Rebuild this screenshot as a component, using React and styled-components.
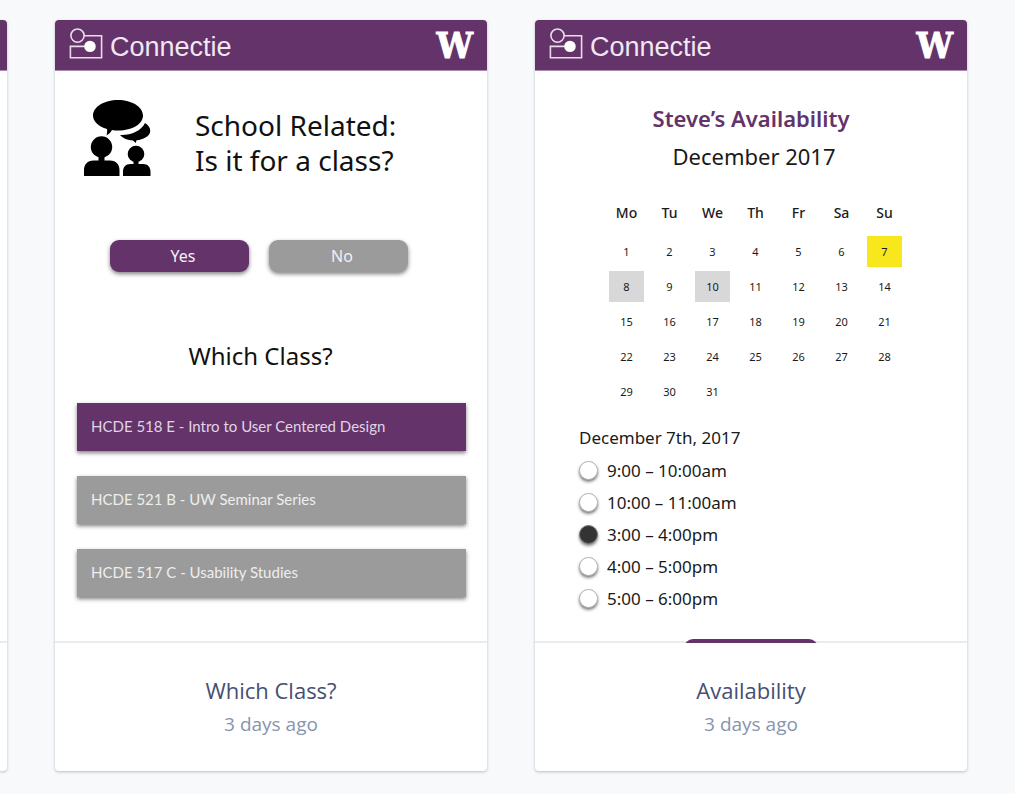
import React from "react";
import styled, { createGlobalStyle } from "styled-components";

const purple = "#63336a";
const humanist = `"Noto Sans", "Open Sans", sans-serif`;

const GlobalStyle = createGlobalStyle`
  *, *::before, *::after { box-sizing: border-box; }
  body { margin: 0; background: #f8f9fb; font-family: "Open Sans", sans-serif; overflow-x: hidden; }
  h2, h3, p { margin: 0; font-weight: 400; }
`;

const Gallery = styled.main`
  display: grid;
  grid-template-columns: 7px minmax(0, 1fr) minmax(0, 1fr) 0;
  gap: 48px;
  padding: 20px 0 23px;
  overflow: hidden;
`;

const Card = styled.article`
  display: flex;
  flex-direction: column;
  background: #fff;
  border-radius: ${(p) => (p.$edge === "left" ? "0 4px 4px 0" : "4px")};
  box-shadow: 0 1px 3px rgba(60, 75, 110, 0.35);
`;

const Preview = styled.div`
  height: 623px;
  overflow: hidden;
  border-radius: inherit;
  border-bottom-left-radius: 0;
  border-bottom-right-radius: 0;
  box-shadow: inset 0 -2px #ececef;
`;

const TopBar = styled.header`
  display: flex;
  align-items: center;
  justify-content: space-between;
  height: 51px;
  padding: 0 14px;
  background: ${purple};
  border-bottom: 1px solid #a98cad;
  color: #fff;
`;

const Brand = styled.div`
  display: flex;
  align-items: center;
  gap: 7px;
  color: #f0e8f1;
  font: 27px/32px "Liberation Sans", Arial, sans-serif;
`;

const BrandName = styled.span`
  padding-top: 4px;
`;

const School = styled.span`
  font: bold 36px/40px "DejaVu Serif Condensed", "DejaVu Serif", serif;
  -webkit-text-stroke: 1px #fff;
`;

const Caption = styled.footer`
  height: 128px;
  padding: 31px 16px 0;
  text-align: center;
`;

const Title = styled.h2`
  color: #454f72;
  font-size: 22px;
  line-height: 32px;
`;

const Age = styled.p`
  color: #8794ae;
  font-size: 19px;
  line-height: 36px;
`;

const ClassScreen = styled.div`
  padding: 28px 21px 0 22px;
  font-family: ${humanist};
  color: #111;
`;

const Question = styled.div`
  display: flex;
  gap: 44px;
  padding-left: 6px;
`;

const QuestionText = styled.h3`
  padding-top: 9px;
  font-size: 28px;
  line-height: 35px;
`;

const Answers = styled.div`
  display: flex;
  gap: 20px;
  padding: 62px 0 0 33px;
`;

const Answer = styled.button`
  width: 139px;
  height: 32px;
  padding: 0 0 0 7px;
  border: 0;
  border-radius: 9px;
  background: ${(p) => (p.$on ? purple : "#9b9b9b")};
  color: #f3eff4;
  font: 16px/32px ${humanist};
  box-shadow: 0 2px 4px rgba(0, 0, 0, 0.5);
`;

const SubHeading = styled.h3`
  padding: 66px 22px 29px 0;
  font-size: 24px;
  line-height: 36px;
  text-align: center;
`;

const ClassList = styled.div`
  display: flex;
  flex-direction: column;
  gap: 25px;
`;

const ClassButton = styled.button`
  height: 48px;
  padding: 0 14px 3px;
  border: 0;
  background: ${(p) => (p.$on ? purple : "#9b9b9b")};
  color: ${(p) => (p.$on ? "#e0d5e2" : "#eeeeee")};
  font: 15px/20px Lato, sans-serif;
  text-align: left;
  box-shadow: 0 2px 4px rgba(0, 0, 0, 0.5);
`;

const AvailabilityScreen = styled.div`
  display: flex;
  flex-direction: column;
  padding-top: 29px;
  font-family: ${humanist};
  color: #1a1a1a;
`;

const Owner = styled.h3`
  color: ${purple};
  font-size: 22px;
  font-weight: 600;
  line-height: 36px;
  text-align: center;
`;

const Month = styled.p`
  padding-left: 6px;
  font-size: 22px;
  line-height: 40px;
  text-align: center;
`;

const Calendar = styled.table`
  align-self: center;
  margin: 18px 0 0 9px;
  border-collapse: collapse;
  table-layout: fixed;
  width: 301px;
  text-align: center;
`;

const Weekday = styled.th`
  height: 40px;
  padding: 0 0 4px;
  font-size: 14px;
  font-weight: 500;
`;

const DayCell = styled.td`
  height: 35px;
  padding: 0;
`;

const marks = { picked: "#f8e71c", busy: "#d8d8d8" };

const Day = styled.span`
  display: block;
  width: 35px;
  margin: 0 auto;
  background: ${(p) => marks[p.$mark] || "transparent"};
  font-size: 11px;
  line-height: 31px;
`;

const Slots = styled.fieldset`
  margin: 0;
  padding: 12px 0 0 44px;
  border: 0;
`;

const SlotDate = styled.legend`
  float: left;
  width: 100%;
  padding: 0;
  font-size: 17px;
  line-height: 33px;
`;

const Slot = styled.label`
  display: flex;
  clear: both;
  align-items: center;
  gap: 9px;
  height: 32px;
  font-size: 17px;
`;

const Radio = styled.input`
  appearance: none;
  width: 19px;
  height: 19px;
  margin: 0;
  border: 1px solid #b5b5b5;
  border-radius: 50%;
  background: #fff;
  box-shadow: 0 2px 3px rgba(0, 0, 0, 0.5);
  &:checked { border-color: #777; background: #333; }
`;

const Confirm = styled.button`
  align-self: center;
  width: 134px;
  height: 32px;
  margin-top: 25px;
  border: 0;
  border-radius: 9px;
  background: ${purple};
`;

const BrandMark = () => (
  <svg width="34" height="34" viewBox="0 0 34 34" fill="none" stroke="#e8dcea" strokeWidth="1.6" aria-hidden="true">
    <circle cx="8.5" cy="7.6" r="6.6" />
    <path d="M15 7.800H32.600V29.700H1.400V18.400H16" />
    <circle cx="21" cy="18.400" r="5.700" fill="#fff" stroke="none" />
  </svg>
);

const TalkIcon = () => (
  <svg width="68" height="78" viewBox="0 0 68 78" fill="#000" aria-hidden="true">
    <path d="M35 1C49 1 60 8 60 16.500C60 25 49 31.500 35.500 31.500C33 31.500 31 31.400 29 31C27.500 33.500 26 35 23.500 36.500C24.200 34 24.300 32 24 30C15.500 27.500 10 22.500 10 16.500C10 8 21 1 35 1Z" />
    <path d="M62 24C66 26.500 68 30 67 33.500C66 37.500 60.500 40.500 53.500 41.300L52.800 44L50 41.500C44.500 41.200 40 39.500 37 36C48 36.500 58 32 62 24Z" />
    <circle cx="18.500" cy="48" r="10.700" />
    <path d="M15.500 56H21.500V61.500H27C33 61.500 36.500 65.500 36.500 71V77H1V71C1 65.500 4.500 61.500 10.500 61.500H15.500Z" />
    <circle cx="53" cy="55" r="8.300" />
    <path d="M50.500 61H55.500V65H60C65 65 67.500 68.500 67.500 72.500V77H40V72.500C40 68.500 42.500 65 47.500 65H50.500Z" />
  </svg>
);

const Header = () => (
  <TopBar>
    <Brand><BrandMark /><BrandName>Connectie</BrandName></Brand>
    <School>W</School>
  </TopBar>
);

const weekdays = ["Mo", "Tu", "We", "Th", "Fr", "Sa", "Su"];
const weeks = [0, 1, 2, 3, 4].map((w) => weekdays.map((_, d) => w * 7 + d + 1).filter((n) => n <= 31));
const dayMarks = { 7: "picked", 8: "busy", 10: "busy" };
const classes = ["HCDE 518 E - Intro to User Centered Design", "HCDE 521 B - UW Seminar Series", "HCDE 517 C - Usability Studies"];
const slots = ["9:00 – 10:00am", "10:00 – 11:00am", "3:00 – 4:00pm", "4:00 – 5:00pm", "5:00 – 6:00pm"];

export default function App() {
  return (
    <>
      <GlobalStyle />
      <Gallery>
        <Card $edge="left">
          <Preview><TopBar /></Preview>
        </Card>
        <Card>
          <Preview>
            <Header />
            <ClassScreen>
              <Question>
                <TalkIcon />
                <QuestionText>School Related:<br />Is it for a class?</QuestionText>
              </Question>
              <Answers>
                <Answer type="button" $on>Yes</Answer>
                <Answer type="button">No</Answer>
              </Answers>
              <SubHeading>Which Class?</SubHeading>
              <ClassList>
                {classes.map((name, i) => (
                  <ClassButton type="button" key={name} $on={i === 0}>{name}</ClassButton>
                ))}
              </ClassList>
            </ClassScreen>
          </Preview>
          <Caption>
            <Title>Which Class?</Title>
            <Age>3 days ago</Age>
          </Caption>
        </Card>
        <Card>
          <Preview>
            <Header />
            <AvailabilityScreen>
              <Owner>Steve’s Availability</Owner>
              <Month>December 2017</Month>
              <Calendar>
                <thead>
                  <tr>{weekdays.map((d) => <Weekday key={d} scope="col">{d}</Weekday>)}</tr>
                </thead>
                <tbody>
                  {weeks.map((week) => (
                    <tr key={week[0]}>
                      {week.map((n) => <DayCell key={n}><Day $mark={dayMarks[n]}>{n}</Day></DayCell>)}
                    </tr>
                  ))}
                </tbody>
              </Calendar>
              <Slots>
                <SlotDate>December 7th, 2017</SlotDate>
                {slots.map((s, i) => (
                  <Slot key={s}>
                    <Radio type="radio" name="slot" defaultChecked={i === 2} />
                    {s}
                  </Slot>
                ))}
              </Slots>
              <Confirm type="button" aria-label="Confirm" />
            </AvailabilityScreen>
          </Preview>
          <Caption>
            <Title>Availability</Title>
            <Age>3 days ago</Age>
          </Caption>
        </Card>
        <Card />
      </Gallery>
    </>
  );
}
